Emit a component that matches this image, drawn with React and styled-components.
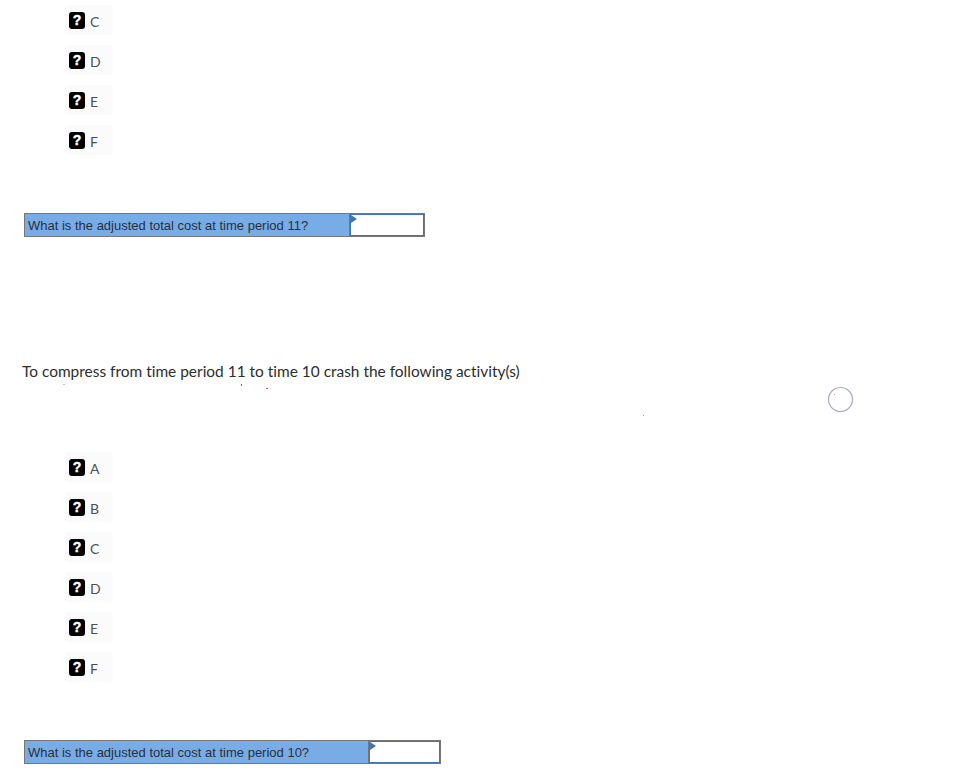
import styled, { createGlobalStyle } from "styled-components";

const GlobalStyle = createGlobalStyle`
  html, body {
    margin: 0;
    padding: 0;
    background: #fff;
  }
`;

const Page = styled.div`
  position: relative;
  display: flex;
  flex-direction: column;
  gap: 125px;
  width: 962px;
  height: 775px;
  overflow: hidden;
  padding: 5px 0 0 24px;
  box-sizing: border-box;
  font-family: Lato, "Open Sans", sans-serif;
  font-variant-ligatures: none;
  color: #2d2d2d;
`;

const Section = styled.section`
  display: flex;
  flex-direction: column;
  align-items: flex-start;
  gap: ${({ $gap }) => $gap}px;
`;

const OptionList = styled.ul`
  list-style: none;
  margin: 0;
  padding: 0 0 0 41px;
  display: flex;
  flex-direction: column;
  gap: 10px;
`;

const Option = styled.li`
  display: flex;
  align-items: center;
  gap: 5px;
  width: 48px;
  height: 30px;
  box-sizing: border-box;
  padding-left: 4px;
  background: #fbfbfb;
  border-radius: 3px;
`;

const HelpBadge = styled.span`
  display: flex;
  align-items: center;
  justify-content: center;
  width: 16px;
  height: 17px;
  background: #000;
  border-radius: 3px;
  color: #fff;
  font-family: "Liberation Sans", Arial, sans-serif;
  font-size: 14px;
  font-weight: 700;
  line-height: 17px;
  -webkit-text-stroke: 0.4px #fff;
`;

const OptionLetter = styled.span`
  font-size: 14px;
  line-height: 17px;
  margin-top: 2px;
  color: #4a5058;
`;

const AnswerTable = styled.div`
  display: flex;
  width: ${({ $width }) => $width}px;
  height: 24px;
  box-sizing: border-box;
  border: 1px solid #777;
  background: #78ace6;
`;

const Question = styled.div`
  width: ${({ $width }) => $width}px;
  padding: 1px 0 0 3px;
  box-sizing: border-box;
  border-right: 1px solid #777;
  font-family: "Liberation Sans", Arial, sans-serif;
  font-size: 13px;
  line-height: 21px;
  color: #2b2f3a;
  white-space: nowrap;
`;

const AnswerCell = styled.div`
  position: relative;
  flex: 1;
  box-sizing: border-box;
  background: #fff;
  border: 1px solid #3f74b5;
`;

const CellMarker = styled.span`
  position: absolute;
  left: 0;
  top: 0;
  width: 0;
  height: 0;
  border-top: 4px solid transparent;
  border-bottom: 4px solid transparent;
  border-left: 6px solid #3f74b5;
`;

const Prompt = styled.p`
  margin: 0 0 0 -2px;
  font-size: 15.45px;
  line-height: 18px;
  color: #2d2d2d;
  white-space: nowrap;
`;

const Overlay = styled.svg`
  position: absolute;
  inset: 0;
  pointer-events: none;
`;

const firstOptions = ["C", "D", "E", "F"];
const secondOptions = ["A", "B", "C", "D", "E", "F"];

const Options = ({ items }) => (
  <OptionList>
    {items.map((letter) => (
      <Option key={letter}>
        <HelpBadge>?</HelpBadge>
        <OptionLetter>{letter}</OptionLetter>
      </Option>
    ))}
  </OptionList>
);

const Answer = ({ text, width, questionWidth }) => (
  <AnswerTable $width={width}>
    <Question $width={questionWidth}>{text}</Question>
    <AnswerCell>
      <CellMarker />
    </AnswerCell>
  </AnswerTable>
);

const App = () => (
  <Page>
    <GlobalStyle />
    <Section $gap={58}>
      <Options items={firstOptions} />
      <Answer
        text="What is the adjusted total cost at time period 11?"
        width={401}
        questionWidth={325}
      />
    </Section>
    <Section $gap={72}>
      <Prompt>To compress from time period 11 to time 10 crash the following activity(s)</Prompt>
      <Section $gap={58}>
        <Options items={secondOptions} />
        <Answer
          text="What is the adjusted total cost at time period 10?"
          width={417}
          questionWidth={344}
        />
      </Section>
    </Section>
    <Overlay width="962" height="775" viewBox="0 0 962 775">
      <circle cx="840.5" cy="399.5" r="12" fill="#fff" stroke="#a9a9c0" strokeWidth="1.2" />
      <rect x="834" y="394" width="1" height="1" fill="#d8a0b0" />
      <rect x="63" y="384" width="2" height="1" fill="#d8b8c4" />
      <rect x="241" y="384" width="1" height="2" fill="#c05070" />
      <rect x="266" y="388" width="2" height="1" fill="#c05070" />
      <rect x="643" y="415" width="1" height="1" fill="#999" />
    </Overlay>
  </Page>
);

export default App;
